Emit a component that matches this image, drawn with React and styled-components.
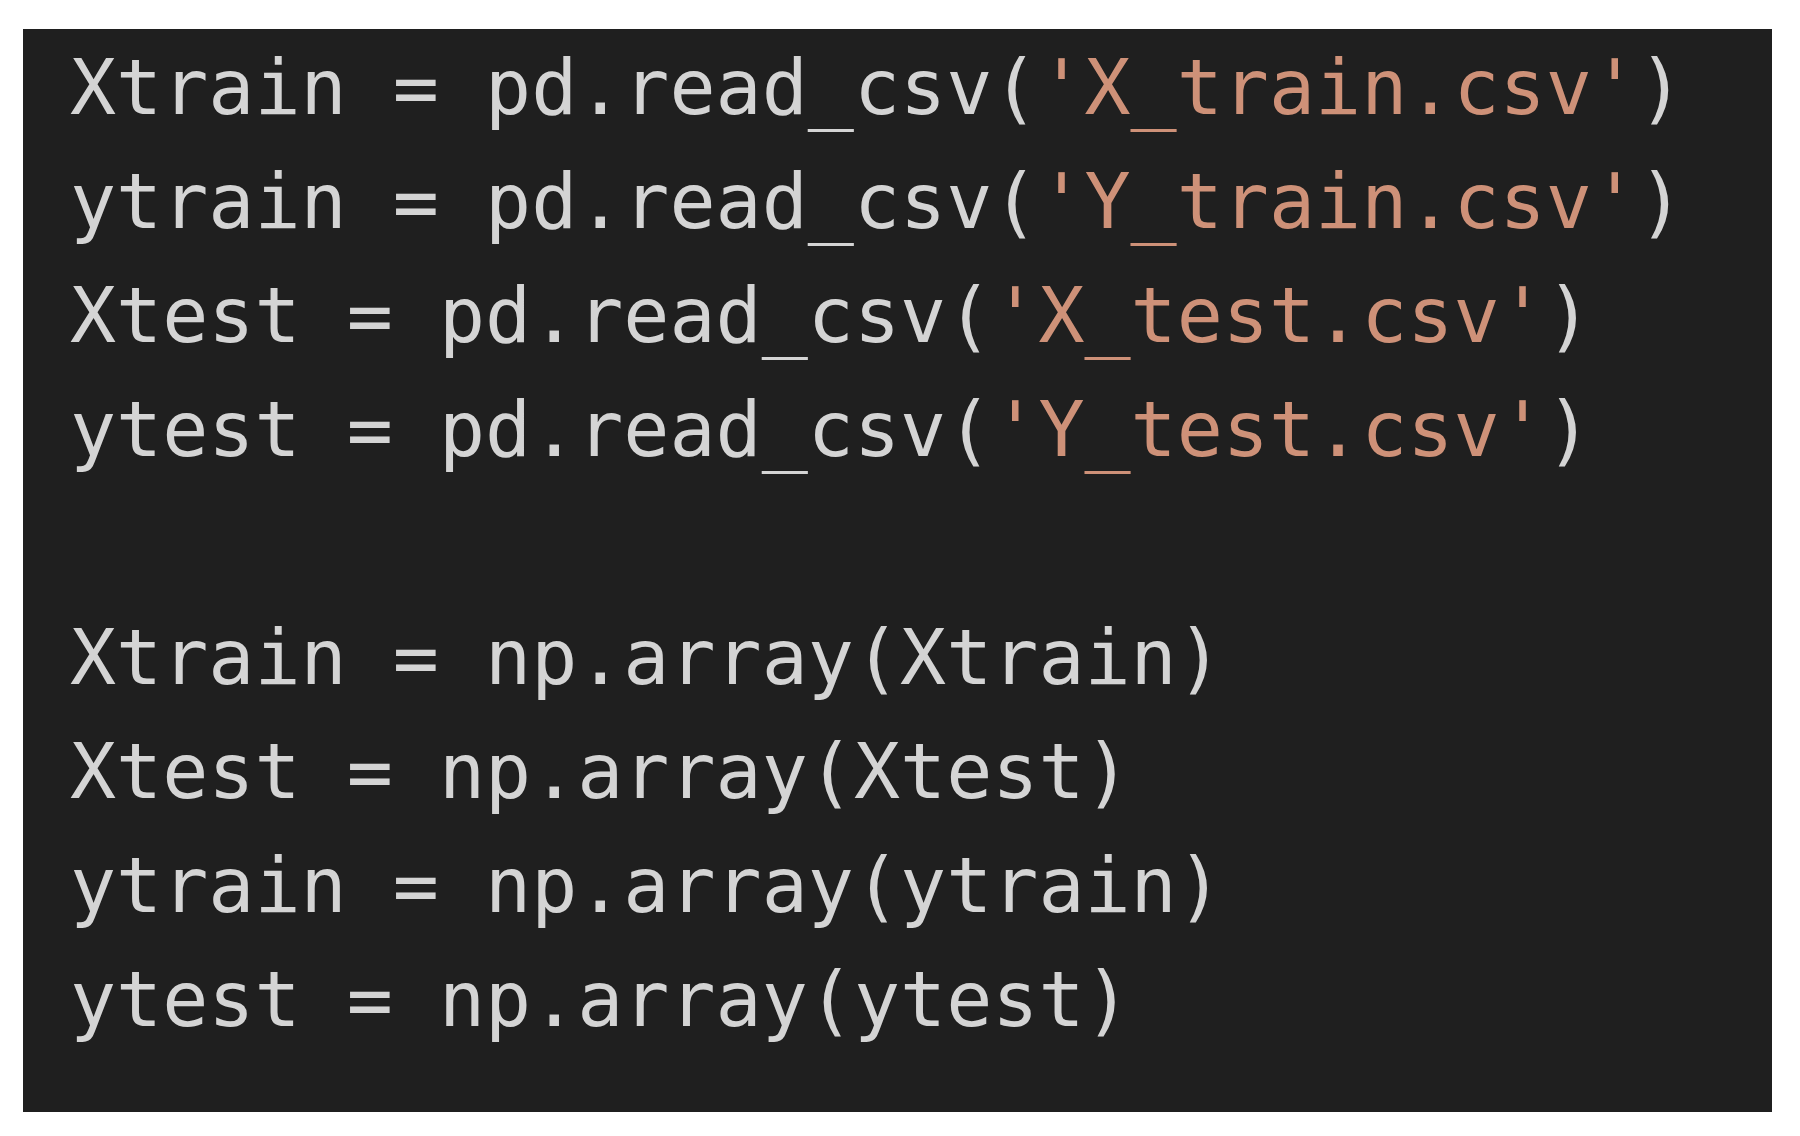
import React from 'react';

import styled, { createGlobalStyle } from 'styled-components';

const GlobalStyle = createGlobalStyle`
  html, body {
    margin: 0;
    padding: 0;
    background: #ffffff;
  }
`;

const Page = styled.div`
  display: flex;
  padding: 29px 0 0 23px;
`;

const CodePanel = styled.div`
  width: 1749px;
  height: 1083px;
  box-sizing: border-box;
  padding: 1.5px 0 0 47px;
  background: #1f1f1f;
  color: #d4d4d4;
  font-family: "DejaVu Sans Mono", monospace;
  font-size: 76.6px;
  line-height: 114px;
  overflow: hidden;
`;

const Line = styled.div`
  white-space: pre;
  height: 114px;
`;

const Str = styled.span`
  color: #ce9178;
`;

// Code lines; `file` is a string literal in orange
const lines = [
  { name: 'Xtrain', call: 'pd.read_csv', file: 'X_train.csv' },
  { name: 'ytrain', call: 'pd.read_csv', file: 'Y_train.csv' },
  { name: 'Xtest', call: 'pd.read_csv', file: 'X_test.csv' },
  { name: 'ytest', call: 'pd.read_csv', file: 'Y_test.csv' },
  null,
  { name: 'Xtrain', call: 'np.array', arg: 'Xtrain' },
  { name: 'Xtest', call: 'np.array', arg: 'Xtest' },
  { name: 'ytrain', call: 'np.array', arg: 'ytrain' },
  { name: 'ytest', call: 'np.array', arg: 'ytest' },
];

export default function App() {
  return (
    <React.Fragment>
      <GlobalStyle />
      <Page>
        <CodePanel>
          { lines.map((line, index) => {
            if (!line) {
              return <Line key={index} />;
            }
            return (
              <Line key={index}>
                { `${line.name} = ${line.call}(` }
                { line.file ? <Str>{ `'${line.file}'` }</Str> : line.arg }
                )
              </Line>
            );
          }) }
        </CodePanel>
      </Page>
    </React.Fragment>
  );
}
